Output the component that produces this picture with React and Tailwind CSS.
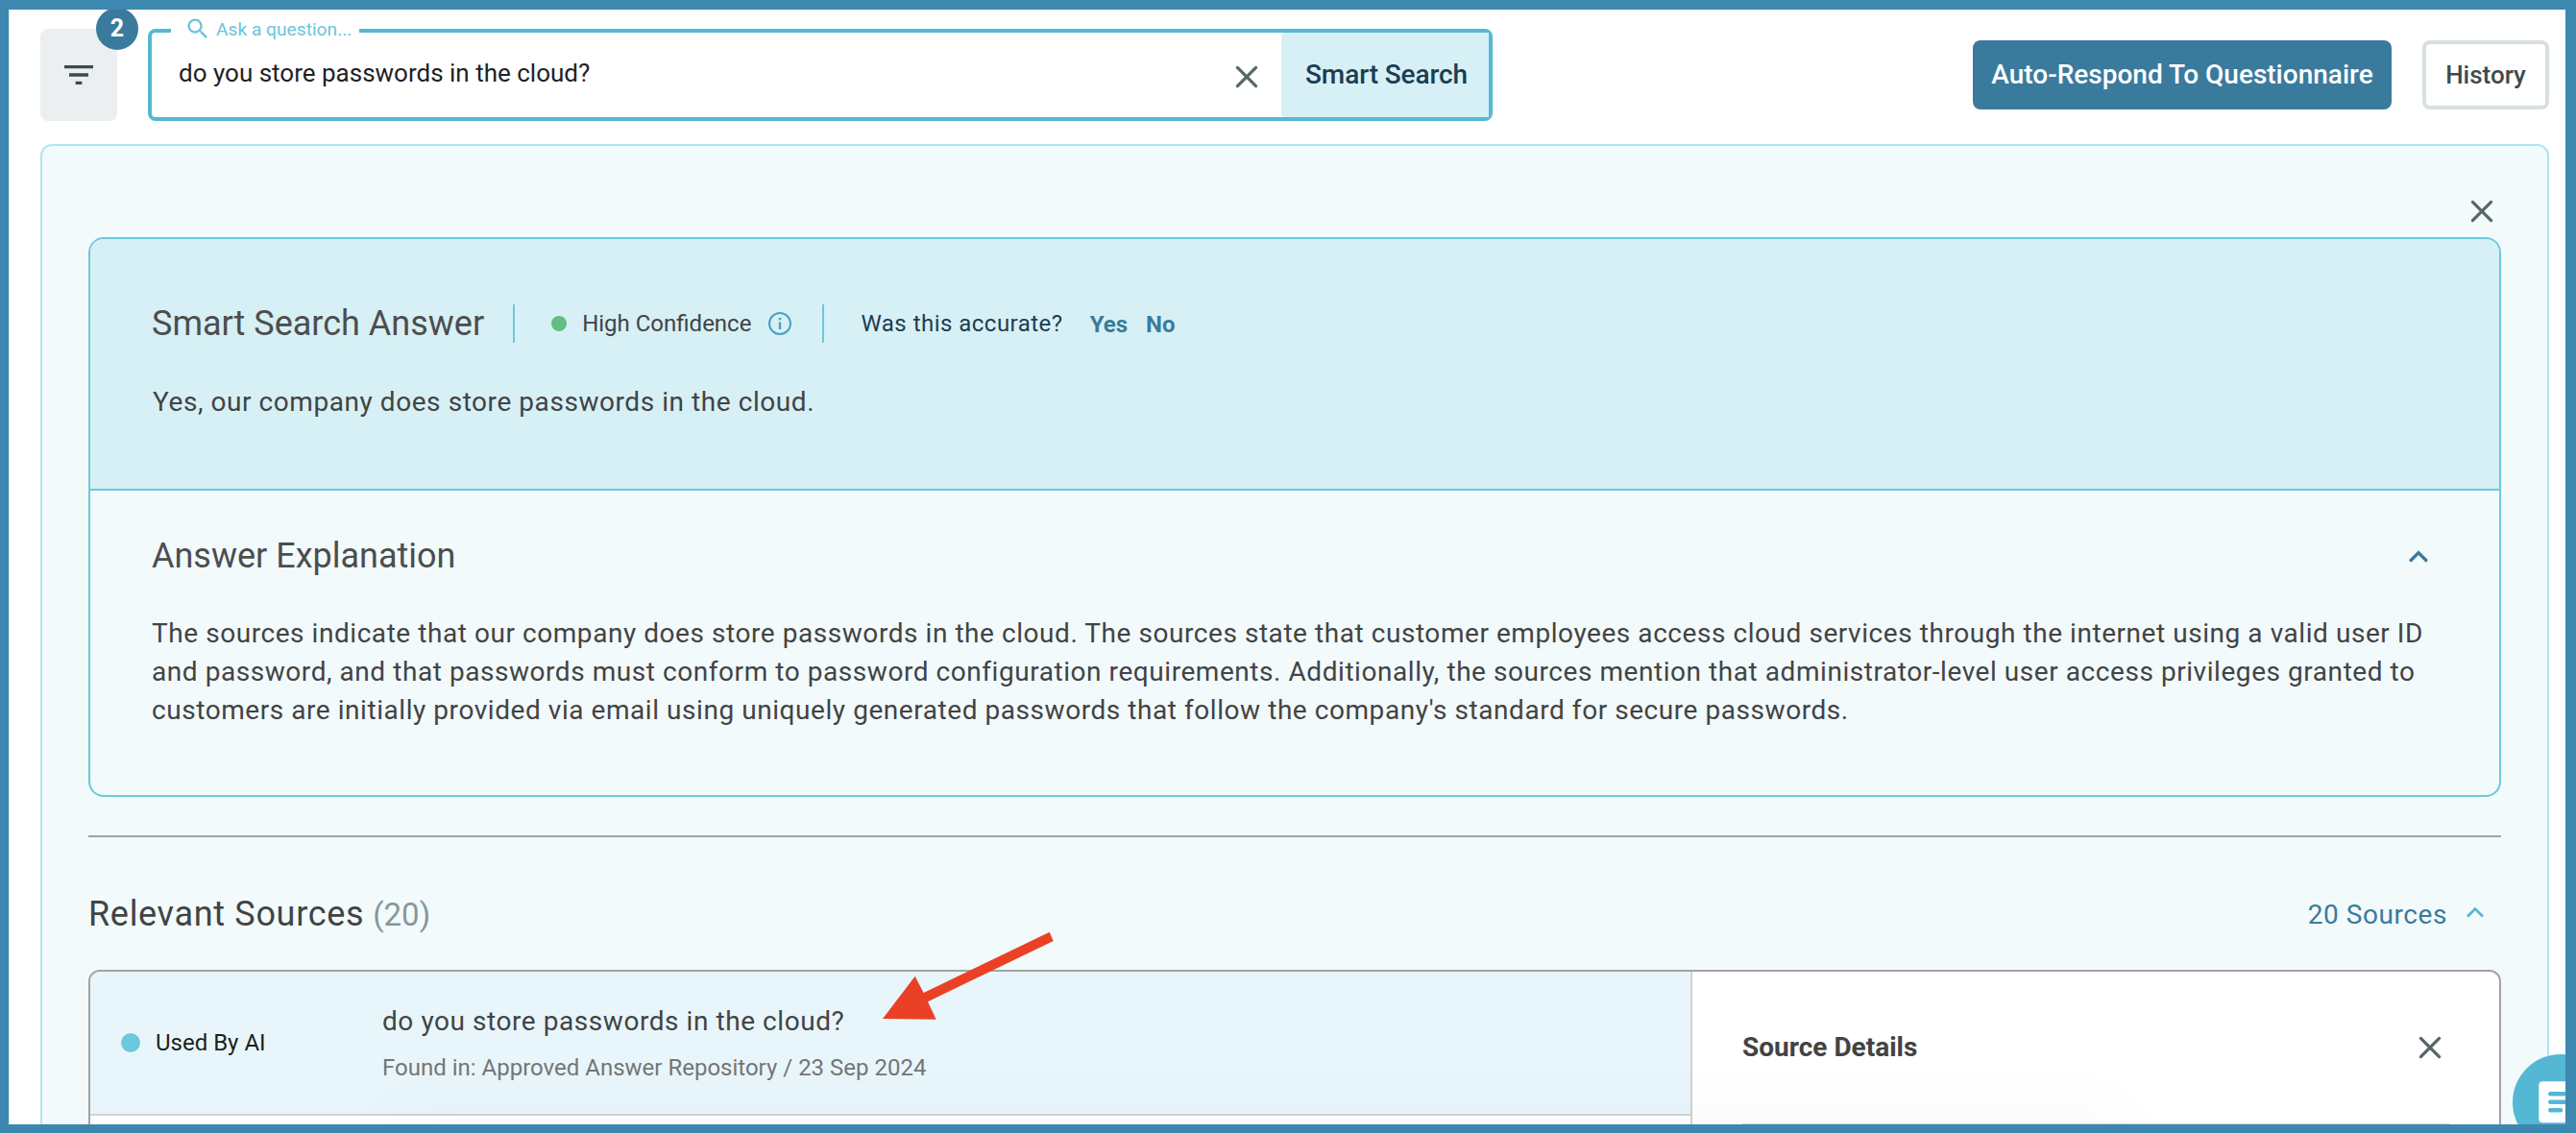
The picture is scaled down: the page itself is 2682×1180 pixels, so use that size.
import React, { useState } from "react";

const CloseIcon = ({ className = "" }) => (
  <svg viewBox="0 0 24 24" className={`size-6 shrink-0 ${className}`} fill="none" stroke="currentColor" strokeWidth="3.2" strokeLinecap="round">
    <path d="M2.4 2.4 21.6 21.6M21.6 2.4 2.4 21.6" />
  </svg>
);

const SearchIcon = () => (
  <svg viewBox="0 0 24 24" className="size-[28px] shrink-0" fill="currentColor">
    <path d="M15.5 14h-.79l-.28-.27C15.41 12.59 16 11.11 16 9.5 16 5.91 13.09 3 9.5 3S3 5.91 3 9.5 5.91 16 9.5 16c1.61 0 3.09-.59 4.23-1.57l.27.28v.79l5 4.99L20.49 19l-4.99-5zm-6 0C7.01 14 5 11.99 5 9.5S7.01 5 9.5 5 14 7.01 14 9.5 11.99 14 9.5 14z" />
  </svg>
);

const FilterIcon = () => (
  <svg viewBox="0 0 24 24" className="size-10" fill="currentColor">
    <path d="M10 18h4v-2h-4v2zM3 6v2h18V6H3zm3 7h12v-2H6v2z" />
  </svg>
);

const InfoIcon = () => (
  <svg viewBox="0 0 24 24" className="size-6 shrink-0 text-[#4a9fc4]" fill="none" stroke="currentColor" strokeWidth="2">
    <circle cx="12" cy="12" r="11" />
    <path d="M12 10.5v7.5M12 6v2.2" strokeWidth="2.4" />
  </svg>
);

const sources = [
  {
    id: 1,
    usedByAI: true,
    question: "do you store passwords in the cloud?",
    foundIn: "Approved Answer Repository",
    date: "23 Sep 2024",
  },
];

const Header = () => {
  const [query, setQuery] = useState("do you store passwords in the cloud?");

  return (
    <div className="flex h-[96px] items-center">
      <button className="relative flex h-[96px] w-[80px] items-center justify-center rounded-lg bg-[#ebeff0] text-[#3e4a4e]">
        <FilterIcon />
        <span className="absolute -top-[22px] -right-[22px] flex size-[44px] items-center justify-center rounded-full bg-[#3a7b9d] text-[25px] font-bold text-white">
          2
        </span>
      </button>

      {/* Search field */}
      <div className="relative ml-8 flex h-[96px] w-[1400px] items-center rounded-lg border-4 border-[#55b8d2]">
        <div className="absolute -top-[19px] left-[20px] flex h-[30px] w-[196px] items-center gap-[5px] bg-white pl-[14px] text-[#6cc5d9]">
          <SearchIcon />
          <span className="pt-[2px] text-[19.2px] whitespace-nowrap">Ask a question...</span>
        </div>
        <input
          value={query}
          onChange={(e) => setQuery(e.target.value)}
          className="h-full min-w-0 flex-1 bg-transparent pl-[28px] pb-[4px] text-[26px] text-[#1f2224] outline-none"
        />
        <button onClick={() => setQuery("")} className="mr-[24px] pt-1 text-[#566669]">
          <CloseIcon />
        </button>
        <button className="h-full w-[216px] rounded-l-sm bg-[#d7f0f5] pl-[3px] text-[28px] font-medium tracking-[-0.1px] text-[#1b3d55]">
          Smart Search
        </button>
      </div>

      <div className="ml-auto flex gap-8">
        <button className="h-[72px] w-[436px] rounded-lg bg-[#3a7b9d] text-[28px] font-medium text-white">
          Auto-Respond To Questionnaire
        </button>
        <button className="h-[72px] w-[132px] rounded-lg border-4 border-[#d8dfe0] text-[26px] font-medium text-[#3e4a4e]">
          History
        </button>
      </div>
    </div>
  );
};

const AnswerCard = () => (
  <div className="h-[583px] overflow-hidden rounded-2xl border-2 border-[#6cc8dc]">
    <div className="h-[262px] border-b-2 border-[#6cc8dc] bg-[#d7f0f5] px-[64px] pt-[68px]">
      <div className="flex h-10 items-center">
        <h2 className="text-[36px] text-[#4d4d4d]">Smart Search Answer</h2>
        <div className="ml-[30px] h-10 w-[2px] bg-[#6cc8dc]" />
        <span className="ml-[38px] size-4 rounded-full bg-[#63bd85]" />
        <span className="ml-[16px] mr-[18px] text-[24px] text-[#434343]">High Confidence</span>
        <InfoIcon />
        <div className="ml-[32px] h-10 w-[2px] bg-[#6cc8dc]" />
        <span className="ml-[38px] text-[24px] tracking-[0.48px] text-[#1b3d55]">Was this accurate?</span>
        <button className="ml-[28px] pt-[2px] text-[24px] font-bold text-[#3a7b9d]">Yes</button>
        <button className="ml-[19px] pt-[2px] text-[24px] font-bold text-[#3a7b9d]">No</button>
      </div>
      <p className="mt-[42px] ml-px text-[28px] leading-10 tracking-[0.56px] text-[#434343]">
        Yes, our company does store passwords in the cloud.
      </p>
    </div>

    <div className="px-[64px] pt-[48px]">
      <div className="flex h-10 items-center justify-between">
        <h2 className="text-[36px] text-[#4d4d4d]">Answer Explanation</h2>
        <svg viewBox="0 0 24 24" className="mt-[2px] size-10 text-[#3a7b9d]" fill="currentColor">
          <path d="m12 8-6 6 1.41 1.41L12 10.83l4.59 4.58L18 14z" />
        </svg>
      </div>
      <p className="mt-[41px] text-[28px] leading-10 tracking-[0.555px] whitespace-nowrap text-[#434343]">
        The sources indicate that our company does store passwords in the cloud. The sources state that customer employees access cloud services through the internet using a valid user ID<br />
        and password, and that passwords must conform to password configuration requirements. Additionally, the sources mention that administrator-level user access privileges granted to<br />
        customers are initially provided via email using uniquely generated passwords that follow the company's standard for secure passwords.
      </p>
    </div>
  </div>
);

const SourceRow = ({ source }) => (
  <div className="flex h-[150px] items-center border-b-2 border-[#d1d3d3] bg-[#e8f6fb]">
    <div className="flex w-[304px] items-center pl-[32px]">
      {source.usedByAI && (
        <>
          <span className="size-5 rounded-full bg-[#6cc8dc]" />
          <span className="ml-[16px] text-[24px] text-[#1c1f21]">Used By AI</span>
        </>
      )}
    </div>
    <div className="pt-[2px]">
      <p className="text-[28px] leading-10 tracking-[0.56px] text-[#434343]">{source.question}</p>
      <p className="mt-[10px] text-[24px] leading-9 text-[#757575]">
        Found in: {source.foundIn} / {source.date}
      </p>
    </div>
  </div>
);

const Sources = () => (
  <div>
    <div className="flex h-[140px] items-center justify-between border-t-2 border-[#a0a3a3]">
      <h2 className="flex items-baseline gap-[9px] pt-[22px] text-[36px] tracking-[0.68px] text-[#434343]">
        Relevant Sources <span className="text-[33px] tracking-normal text-[#84989c]">(20)</span>
      </h2>
      <button className="mr-[18px] flex items-center gap-[20px] pt-[24px] text-[28px] tracking-[0.56px] text-[#3a7b9d]">
        20 Sources
        <svg viewBox="0 0 18 12" className="mb-1.5 h-3 w-[18px] text-[#52b5d3]" fill="none" stroke="currentColor" strokeWidth="2.6">
          <path d="M1 10.5 9 2.5l8 8" />
        </svg>
      </button>
    </div>

    <div className="flex h-[240px] overflow-hidden rounded-xl border-2 border-[#a0a3a3] bg-white">
      <div className="w-[1666px]">
        {sources.map((source) => (
          <SourceRow key={source.id} source={source} />
        ))}
      </div>
      <div className="flex-1 border-l-2 border-[#d1d3d3] px-[52px]">
        <div className="flex h-[160px] items-center justify-between border-b-2 border-[#d8d8d8] pr-[8px]">
          <h3 className="text-[28px] font-bold text-[#434343]">Source Details</h3>
          <CloseIcon className="text-[#566669]" />
        </div>
      </div>
    </div>
  </div>
);

const App = () => {
  return (
    <div className="relative h-[1180px] w-[2682px] overflow-hidden border-t-[10px] border-r-[11px] border-b-[9px] border-l-[9px] border-[#3c88b0] bg-white font-[Roboto,sans-serif]">
      <div className="border-l border-[#dfe6ea] pt-[20px] pr-[17px] pl-[32px]">
        <Header />

        <div className="mt-[24px] h-[1100px] rounded-xl border-2 border-[#aee6ee] bg-[#f2fafc] px-[48px]">
          <div className="flex h-[95px] items-end justify-end pr-[8px] pb-[15px] text-[#566669]">
            <CloseIcon />
          </div>
          <AnswerCard />
          <div className="h-10" />
          <Sources />
        </div>
      </div>

      {/* Soft shade along the bottom edge */}
      <div className="absolute top-[1161px] left-[400px] h-10 w-[1800px] shadow-[0_0_80px_rgba(0,0,0,0.05)]" />

      {/* Pointer to the matched source */}
      <svg viewBox="0 0 180 94" className="absolute top-[959px] left-[909px] h-[94px] w-[180px]" fill="#ea4126">
        <path d="M1 92 34.7 47.7 43.6 65 174.7 1.7 178.7 11 48 74.3 56.7 92.7Z" />
      </svg>

      {/* Chat launcher */}
      <button className="absolute top-[1088px] left-[2607px] size-[100px] rounded-full bg-[#54b7d3]">
        <svg viewBox="0 0 100 100" className="size-full">
          <rect x="27.3" y="28.2" width="46" height="43" rx="4" fill="#fff" />
          <path d="M39.2 41.3h24M39.2 49.8h24M39.2 58.3h10.8" stroke="#54b7d3" strokeWidth="4.4" strokeLinecap="round" />
        </svg>
      </button>
    </div>
  );
};

export default App;
